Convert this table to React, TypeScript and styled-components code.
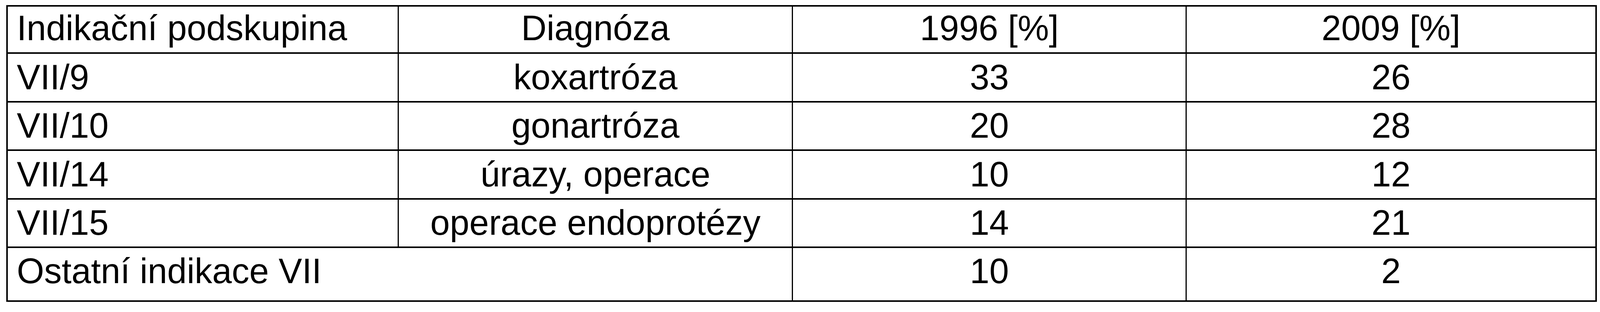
import React from 'react';
import styled, { createGlobalStyle } from 'styled-components';

type Align = 'left' | 'center';

type CellProps = {
  $align?: Align;
};

type RowProps = {
  $height: number;
  $shift?: number;
};

const GlobalStyle = createGlobalStyle`
  html, body {
    margin: 0;
    padding: 0;
    background: #fff;
  }

  body {
    font-family: "Liberation Sans", Arial, Helvetica, sans-serif;
    color: #000;
  }
`;

// the table spans the window width, so the columns are given as shares of it
const Page = styled.div`
  padding: 13px 0.2vw 0 0.39vw;
`;

const Table = styled.table`
  width: 100%;
  table-layout: fixed;
  border-collapse: collapse;
  border: 4px solid #000;
  font-size: 90px;
  line-height: 1.15;
`;

const Row = styled.tr<RowProps>`
  height: ${ (p) => p.$height }px;

  td {
    padding-bottom: ${ (p) => p.$shift ?? 0 }px;
  }
`;

const Cell = styled.td<CellProps>`
  border-top: 4px solid #000;
  border-bottom: 4px solid #000;
  border-left: 3px solid #000;
  border-right: 3px solid #000;
  padding: 0;
  padding-left: ${ (p) => p.$align === 'left' ? '0.56vw' : '0' };
  text-align: ${ (p) => p.$align ?? 'center' };
  vertical-align: middle;
  white-space: nowrap;
  overflow: hidden;
  font-weight: normal;
`;

const rows = [
  { group: 'VII/9', diagnosis: 'koxartróza', y1996: '33', y2009: '26' },
  { group: 'VII/10', diagnosis: 'gonartróza', y1996: '20', y2009: '28' },
  { group: 'VII/14', diagnosis: 'úrazy, operace', y1996: '10', y2009: '12' },
  { group: 'VII/15', diagnosis: 'operace endoprotézy', y1996: '14', y2009: '21' },
];

export default function App() {
  return (
    <>
      <GlobalStyle />
      <Page>
        <Table>
          <colgroup>
            <col style={ { width: '24.63%' } } />
            <col style={ { width: '24.8%' } } />
            <col style={ { width: '24.78%' } } />
            <col />
          </colgroup>
          <tbody>
            <Row $height={ 121 } $shift={ 6 }>
              <Cell $align="left">Indikační podskupina</Cell>
              <Cell>Diagnóza</Cell>
              <Cell>1996 [%]</Cell>
              <Cell>2009 [%]</Cell>
            </Row>
            { rows.map((r) => (
              <Row key={ r.group } $height={ 124.5 }>
                <Cell $align="left">{ r.group }</Cell>
                <Cell>{ r.diagnosis }</Cell>
                <Cell>{ r.y1996 }</Cell>
                <Cell>{ r.y2009 }</Cell>
              </Row>
            )) }
            <Row $height={ 138 } $shift={ 14 }>
              <Cell $align="left" colSpan={ 2 }>Ostatní indikace VII</Cell>
              <Cell>10</Cell>
              <Cell>2</Cell>
            </Row>
          </tbody>
        </Table>
      </Page>
    </>
  );
}
